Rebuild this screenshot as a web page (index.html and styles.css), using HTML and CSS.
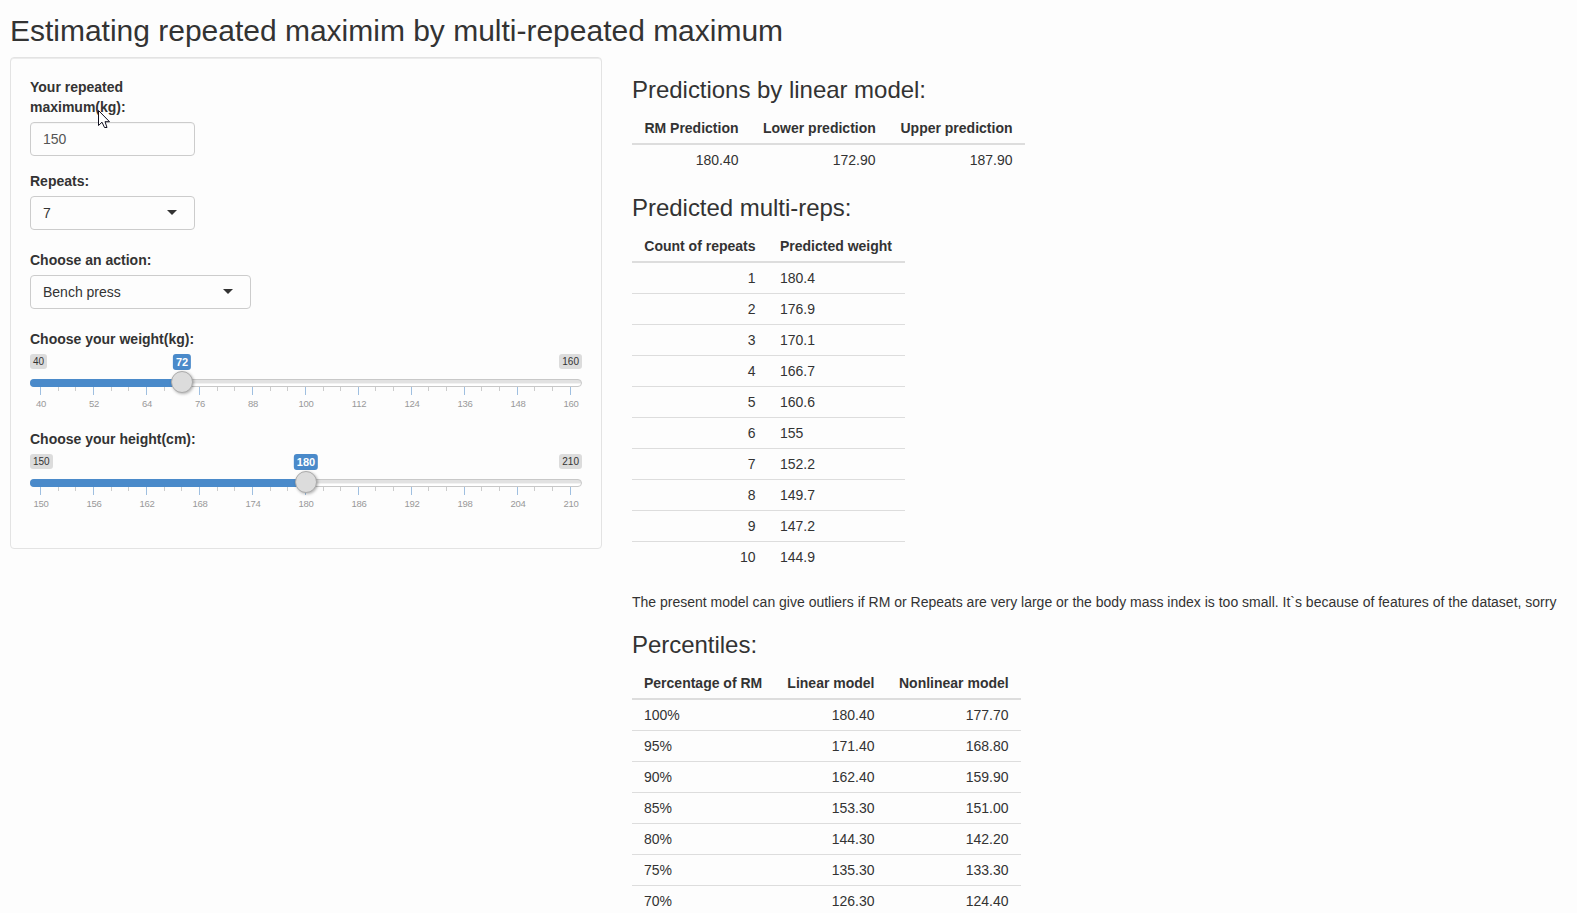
FILE: index.html
```html
<!DOCTYPE html>
<html lang="en">
<head>
<meta charset="utf-8">
<title>Estimating repeated maximum</title>
<link rel="stylesheet" href="styles.css">
</head>
<body>
<h2 class="title">Estimating repeated maximim by multi-repeated maximum</h2>
<div class="layout">
  <form class="panel">
    <div class="field narrow"><label>Your repeated maximum(kg):</label><div class="control typed">150</div></div>
    <div class="field narrow pick"><label>Repeats:</label><div class="control">7<i class="caret"></i></div></div>
    <div class="field medium pick"><label>Choose an action:</label><div class="control">Bench press<i class="caret"></i></div></div>
    <div class="field"><label>Choose your weight(kg):</label><div class="slider" data-min="40" data-max="160" data-value="72" data-at="152"></div></div>
    <div class="field"><label>Choose your height(cm):</label><div class="slider" data-min="150" data-max="210" data-value="180" data-at="276"></div></div>
    <svg class="cursor" width="14" height="20" viewBox="0 0 14 20"><path d="M1.5 1.5V16.5L5 13.2L7.5 18.5H10L8 12.7H12.5Z" fill="#fff" stroke="#101020"/></svg>
  </form>
  <main class="results">
    <h3>Predictions by linear model:</h3>
    <table class="t1">
      <tr><th class="r">RM Prediction</th><th class="r">Lower prediction</th><th class="r">Upper prediction</th></tr>
      <tr><td class="r">180.40</td><td class="r">172.90</td><td class="r">187.90</td></tr>
    </table>
    <h3>Predicted multi-reps:</h3>
    <table class="t2">
      <tr><th class="r">Count of repeats</th><th>Predicted weight</th></tr>
      <tr><td class="r">1</td><td>180.4</td></tr>
      <tr><td class="r">2</td><td>176.9</td></tr>
      <tr><td class="r">3</td><td>170.1</td></tr>
      <tr><td class="r">4</td><td>166.7</td></tr>
      <tr><td class="r">5</td><td>160.6</td></tr>
      <tr><td class="r">6</td><td>155</td></tr>
      <tr><td class="r">7</td><td>152.2</td></tr>
      <tr><td class="r">8</td><td>149.7</td></tr>
      <tr><td class="r">9</td><td>147.2</td></tr>
      <tr><td class="r">10</td><td>144.9</td></tr>
    </table>
    <p>The present model can give outliers if RM or Repeats are very large or the body mass index is too small. It`s because of features of the dataset, sorry</p>
    <h3>Percentiles:</h3>
    <table class="t3">
      <tr><th>Percentage of RM</th><th class="r">Linear model</th><th class="r">Nonlinear model</th></tr>
      <tr><td>100%</td><td class="r">180.40</td><td class="r">177.70</td></tr>
      <tr><td>95%</td><td class="r">171.40</td><td class="r">168.80</td></tr>
      <tr><td>90%</td><td class="r">162.40</td><td class="r">159.90</td></tr>
      <tr><td>85%</td><td class="r">153.30</td><td class="r">151.00</td></tr>
      <tr><td>80%</td><td class="r">144.30</td><td class="r">142.20</td></tr>
      <tr><td>75%</td><td class="r">135.30</td><td class="r">133.30</td></tr>
      <tr><td>70%</td><td class="r">126.30</td><td class="r">124.40</td></tr>
    </table>
  </main>
</div>
<script src="slider.js"></script>
</body>
</html>
```
FILE: slider.js
```js
document.querySelectorAll('.slider').forEach(function (el) {
  var d = el.dataset, min = +d.min, max = +d.max, ticks = '', labels = '';
  for (var i = 0; i <= 30; i++) ticks += '<i class="' + (i % 3 ? 'minor' : 'major') + '"></i>';
  for (var j = 0; j <= 10; j++) labels += '<span>' + (min + (max - min) * j / 10) + '</span>';
  el.innerHTML =
    '<div class="ends"><span>' + min + '</span><span>' + max + '</span></div>' +
    '<div class="track"><div class="fill" style="width:' + d.at + 'px"></div></div>' +
    '<div class="ticks">' + ticks + '</div><div class="labels">' + labels + '</div>' +
    '<b class="value" style="left:' + d.at + 'px">' + d.value + '</b>' +
    '<i class="handle" style="left:' + d.at + 'px"></i>';
});
```
FILE: styles.css
```css
* { box-sizing: border-box; }
html { overflow: hidden; height: 100%; }
body { margin: 0; padding: 14px 10px 0; height: 100%; overflow: hidden; background: #fdfdfd; color: #333; font: 14px/20px "Liberation Sans", Arial, sans-serif; }
.title { margin: 0 0 10px; font-size: 30px; line-height: 33px; font-weight: 400; letter-spacing: -.01px; }
.layout { display: flex; align-items: flex-start; gap: 30px; }
.panel { position: relative; width: 592px; height: 492px; padding: 19px; border: 1px solid #e3e3e3; border-radius: 4px; box-shadow: inset 0 1px 0 #ececec; flex: none; }
.field { margin-bottom: 15px; }
.field label { display: block; margin-bottom: 5px; font-weight: 700; }
.narrow { width: 165px; }
.medium { width: 221px; }
.pick { margin-bottom: 20px; }
.control { display: flex; align-items: center; justify-content: space-between; height: 34px; padding: 0 17px 0 12px; border: 1px solid #ccc; border-radius: 4px; }
.typed { color: #555; box-shadow: inset 0 1px 1px rgba(0,0,0,.03); }
.caret { margin-bottom: 1px; border: 5px solid transparent; border-top-color: #333; border-bottom: 0; }
.slider { position: relative; height: 60px; }
.ends { display: flex; justify-content: space-between; margin-bottom: 10px; font-size: 10px; line-height: 13px; }
.ends span { padding: 1px 3px; background: #dcdcdc; border-radius: 3px; }
.track { height: 8px; border: 1px solid #c8c8c8; border-radius: 8px; background: linear-gradient(#e2e2e2 0 45%, #f4f4f4 60%, #fff 70%); }
.fill { height: 8px; margin: -1px; background: #4a8aca; border-radius: 8px 0 0 8px; }
.value { position: absolute; top: 0; transform: translateX(-50%); padding: 1px 3px; border-radius: 3px; background: #4a8aca; color: #fff; font-size: 11px; line-height: 14px; }
.handle { position: absolute; top: 17px; width: 22px; height: 22px; margin-left: -11px; border: 1px solid #ababab; border-radius: 50%; background: #dcdcdc; box-shadow: 1px 1px 3px rgba(0,0,0,.3); }
.ticks { display: flex; justify-content: space-between; height: 8px; margin: 0 11px 0 10px; }
.ticks i { width: 1px; height: 4px; background: #ccc; }
.ticks .major { height: 8px; background: #9fbfe0; }
.labels { display: flex; margin: 3px -16px 0 -15.5px; font-size: 9.5px; line-height: 12px; letter-spacing: -.25px; color: #999; }
.labels span { flex: 0 0 53px; text-align: center; }
.cursor { position: absolute; left: 86px; top: 51px; }
.results { padding-top: 20px; white-space: nowrap; }
h3 { margin: 0 0 10px; font-size: 24px; line-height: 26px; font-weight: 400; letter-spacing: -.03px; }
table { margin-bottom: 20px; border-spacing: 0; table-layout: fixed; }
th, td { padding: 5px 12px; text-align: left; line-height: 20px; }
th { border-bottom: 2px solid #ddd; }
td { border-bottom: 1px solid #ddd; }
tr:last-child td { border-bottom: 0; }
.r { text-align: right; padding-right: 12.5px; }
th.r:first-child { padding-left: 11px; }
.t1 { width: 393px; }
.t1 th:first-child { width: 119px; }
.t2 { width: 273px; }
.t2 th:first-child { width: 136px; }
.t3 { width: 389px; }
.t3 th:first-child { width: 142px; }
.t3 th:last-child { width: 134px; }
p { margin: 0 0 20px; }
```
